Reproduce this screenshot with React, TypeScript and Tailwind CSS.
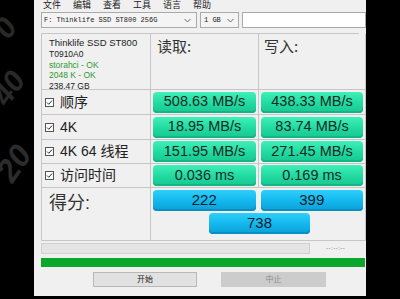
import React from 'react'

const rows = [
  { label: '顺序', read: '508.63 MB/s', write: '438.33 MB/s' },
  { label: '4K', read: '18.95 MB/s', write: '83.74 MB/s' },
  { label: '4K 64 线程', read: '151.95 MB/s', write: '271.45 MB/s' },
  { label: '访问时间', read: '0.036 ms', write: '0.169 ms' },
]

const font = { fontFamily: '"Liberation Sans", "Noto Sans CJK SC", sans-serif' }

function GreenPill({ value }: { value: string }) {
  return (
    <div className="flex items-center justify-center h-[21px] rounded-[4px] text-[14.5px] text-[#1a2a24] bg-gradient-to-b from-[#3ff0b8] via-[#22dca2] to-[#18c690] shadow-[inset_0_-2px_0_#14b585]">
      {value}
    </div>
  )
}

function BluePill({ value }: { value: string }) {
  return (
    <div className="flex items-center justify-center h-[21px] rounded-[4px] text-[15px] text-[#10202a] bg-gradient-to-b from-[#2cd0fa] via-[#14b8ee] to-[#0a9fd6] shadow-[inset_0_-2px_0_#0890c4]">
      {value}
    </div>
  )
}

function Check() {
  return (
    <div className="w-[9px] h-[9px] border border-[#555] bg-white flex items-center justify-center">
      <svg width="7" height="7" viewBox="0 0 7 7">
        <path d="M1 3.5 L2.8 5.3 L6 1.5" stroke="#333" strokeWidth="1" fill="none" />
      </svg>
    </div>
  )
}

function Chevron() {
  return (
    <svg width="7" height="5" viewBox="0 0 7 5">
      <path d="M0.5 1 L3.5 4 L6.5 1" stroke="#666" strokeWidth="1" fill="none" />
    </svg>
  )
}

export default function App() {
  return (
    <div className="flex w-[400px] h-[299px] bg-black overflow-hidden" style={font}>
      {/* left backdrop, faint digits of the desk picture */}
      <div className="relative w-[34px] shrink-0 overflow-hidden">
        <span className="absolute left-[-3px] top-[11px] text-[30px] leading-[34px] font-bold italic text-[#292929] rotate-[-55deg]">0</span>
        <span className="absolute left-[-8px] top-[71px] text-[30px] leading-[34px] font-bold italic text-[#292929] rotate-[-55deg]">40</span>
        <span className="absolute left-[-4px] top-[146px] text-[32px] leading-[34px] font-bold italic text-[#2c2c2c] rotate-[-55deg]">20</span>
      </div>

      {/* window */}
      <div className="flex flex-col w-[332px] h-[296px] bg-[#f0f0f0] px-[7px]">
        {/* menu */}
        <div className="flex h-[12px] gap-[12px] pl-[2px] text-[9px] leading-[12px] text-[#222] -mt-[1px]">
          <span>文件</span>
          <span>编辑</span>
          <span>查看</span>
          <span>工具</span>
          <span>语言</span>
          <span>帮助</span>
        </div>

        {/* selectors */}
        <div className="flex gap-[3px] mt-[1px] h-[16px] -mr-[7px]">
          <div className="flex items-center justify-between w-[156px] border border-[#aaa] bg-[#f4f4f4] pl-[2px] pr-[5px] text-[7px] text-[#222]" style={{ fontFamily: '"Liberation Mono", monospace' }}>
            <span>F: Thinklife SSD ST800 256G</span>
            <Chevron />
          </div>
          <div className="flex items-center justify-between w-[39px] border border-[#aaa] bg-[#f4f4f4] pl-[3px] pr-[4px] text-[7px] text-[#222]" style={{ fontFamily: '"Liberation Mono", monospace' }}>
            <span>1 GB</span>
            <Chevron />
          </div>
          <div className="flex-1 border border-[#aaa] bg-white" />
        </div>

        {/* table */}
        <div className="mt-[5px] grid grid-cols-[109px_108px_107px] grid-rows-[56px_25px_25px_24px_24px_53px] border-t border-l border-[#c6c6c6]">
          <div className="border-r border-b border-[#c6c6c6] px-[7px] pt-[3px] text-[8.5px] leading-[10.5px] text-[#222]">
            <div className="text-[9.5px] leading-[11px]">Thinklife SSD ST800</div>
            <div className="mt-[1px]">T0910A0</div>
            <div className="text-[#2f9a2f]">storahci - OK</div>
            <div className="text-[#2f9a2f]">2048 K - OK</div>
            <div>238.47 GB</div>
          </div>
          <div className="border-r border-b border-[#c6c6c6] pl-[6px] pt-[1px] text-[15px] text-[#333]" style={{ fontFamily: '"Noto Sans CJK SC", serif' }}>
            读取:
          </div>
          <div className="border-r border-b border-[#c6c6c6] pl-[5px] pt-[1px] text-[15px] text-[#333]" style={{ fontFamily: '"Noto Sans CJK SC", serif' }}>
            写入:
          </div>

          {rows.map((r) => (
            <React.Fragment key={r.label}>
              <div className="flex items-center gap-[6px] pl-[3px] border-r border-b border-[#c6c6c6] text-[14px] text-[#222]">
                <Check />
                <span>{r.label}</span>
              </div>
              <div className="border-r border-b border-[#c6c6c6] px-[2px] flex flex-col justify-center">
                <GreenPill value={r.read} />
              </div>
              <div className="border-r border-b border-[#c6c6c6] px-[2px] flex flex-col justify-center">
                <GreenPill value={r.write} />
              </div>
            </React.Fragment>
          ))}

          <div className="border-r border-b border-[#c6c6c6] pl-[7px] pt-[2px] text-[18px] text-[#333]">得分:</div>
          <div className="col-span-2 border-r border-b border-[#c6c6c6] px-[2px] pt-[2px] flex flex-col gap-[2px]">
            <div className="grid grid-cols-2 gap-[5px]">
              <BluePill value="222" />
              <BluePill value="399" />
            </div>
            <div className="w-[101px] ml-[56px]">
              <BluePill value="738" />
            </div>
          </div>
        </div>

        {/* progress */}
        <div className="flex items-center mt-[2px] h-[11px]">
          <div className="w-[269px] h-full border border-[#d0d0d0] bg-[#e4e4e4]" />
          <span className="ml-[16px] text-[6px] text-[#666] tracking-[0.5px]">--:--:--</span>
        </div>
        <div className="mt-[4px] h-[9px] bg-[#0aa82a] -mr-[6px]" />

        {/* buttons */}
        <div className="flex mt-[5px] h-[15px]">
          <div className="ml-[52px] w-[104px] flex items-center justify-center border border-[#b8b8b8] bg-[#e1e1e1] text-[8px] text-[#222]">开始</div>
          <div className="ml-[24px] w-[105px] flex items-center justify-center bg-[#cccccc] text-[8px] text-[#8a8a8a]">中止</div>
        </div>
      </div>
    </div>
  )
}
